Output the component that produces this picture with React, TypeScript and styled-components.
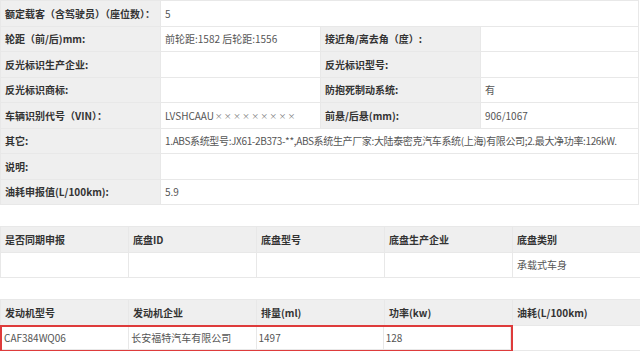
import React from "react";
import styled, { createGlobalStyle } from "styled-components";

const Global = createGlobalStyle`
  html, body { margin: 0; padding: 0; background: #fff; }
  body { font-family: "Noto Sans CJK SC", "Noto Sans", sans-serif; font-size: 10px; color: #333; }
`;

const Page = styled.div`
  width: 640px;
  display: flex;
  flex-direction: column;
  gap: 21px;
`;

const Grid = styled.div<{ $cols: string; $width: number }>`
  display: grid;
  grid-template-columns: ${(p) => p.$cols};
  grid-auto-rows: 25.5px;
  width: ${(p) => p.$width}px;
  border-top: 1px solid #e8e8e8;
  border-left: 1px solid #e8e8e8;
  box-sizing: border-box;
`;

const Cell = styled.div<{ $label?: boolean; $span?: number; $tight?: boolean }>`
  display: flex;
  align-items: center;
  padding: 0 4px;
  box-sizing: border-box;
  border-right: 1px solid #e8e8e8;
  border-bottom: 1px solid #e8e8e8;
  background: ${(p) => (p.$label ? "#efefef" : "#fff")};
  font-weight: ${(p) => (p.$label ? 700 : 400)};
  color: ${(p) => (p.$label ? "#333" : "#555")};
  letter-spacing: ${(p) => (p.$tight ? "-0.35px" : "normal")};
  white-space: nowrap;
  overflow: hidden;
  grid-column: ${(p) => (p.$span ? `span ${p.$span}` : "auto")};
`;

const Mask = styled.span`
  font-size: 7.5px;
  letter-spacing: 1.6px;
  color: #777;
  margin-left: 1px;
`;

const Highlight = styled.div`
  grid-column: span 4;
  display: grid;
  grid-template-columns: repeat(4, 1fr);
  border: 2px solid #de3b3b;
  margin: -1px 0 -1px -1px;
  box-sizing: border-box;
  & > div { padding-left: 2px; }
`;

const pairs: [string, React.ReactNode, string, string][] = [
  ["轮距（前/后)mm:", "前轮距:1582 后轮距:1556", "接近角/离去角（度）:", ""],
  ["反光标识生产企业:", "", "反光标识型号:", ""],
  ["反光标识商标:", "", "防抱死制动系统:", "有"],
  [
    "车辆识别代号（VIN）：",
    <>
      LVSHCAAU<Mask>×××××××××</Mask>
    </>,
    "前悬/后悬(mm):",
    "906/1067",
  ],
];

export default function App() {
  return (
    <>
      <Global />
      <Page>
        <Grid $cols="160px 160px 160px 158px" $width={639}>
          <Cell $label>额定载客（含驾驶员）（座位数）：</Cell>
          <Cell $span={3}>5</Cell>
          {pairs.map((r, i) => (
            <React.Fragment key={i}>
              <Cell $label>{r[0]}</Cell>
              <Cell>{r[1]}</Cell>
              <Cell $label>{r[2]}</Cell>
              <Cell>{r[3]}</Cell>
            </React.Fragment>
          ))}
          <Cell $label>其它:</Cell>
          <Cell $span={3} $tight>
            1.ABS系统型号:JX61-2B373-**,ABS系统生产厂家:大陆泰密克汽车系统(上海)有限公司;2.最大净功率:126kW.
          </Cell>
          <Cell $label>说明:</Cell>
          <Cell $span={3}></Cell>
          <Cell $label>油耗申报值(L/100km):</Cell>
          <Cell $span={3}>5.9</Cell>
        </Grid>

        <Grid $cols="repeat(5, 128px)" $width={641}>
          {["是否同期申报", "底盘ID", "底盘型号", "底盘生产企业", "底盘类别"].map((h) => (
            <Cell $label key={h}>{h}</Cell>
          ))}
          <Cell />
          <Cell />
          <Cell />
          <Cell />
          <Cell>承载式车身</Cell>
        </Grid>

        <Grid $cols="repeat(5, 128px)" $width={641}>
          {["发动机型号", "发动机企业", "排量(ml)", "功率(kw)", "油耗(L/100km)"].map((h) => (
            <Cell $label key={h}>{h}</Cell>
          ))}
          <Highlight>
            <Cell>CAF384WQ06</Cell>
            <Cell>长安福特汽车有限公司</Cell>
            <Cell>1497</Cell>
            <Cell>128</Cell>
          </Highlight>
          <Cell />
        </Grid>
      </Page>
    </>
  );
}
